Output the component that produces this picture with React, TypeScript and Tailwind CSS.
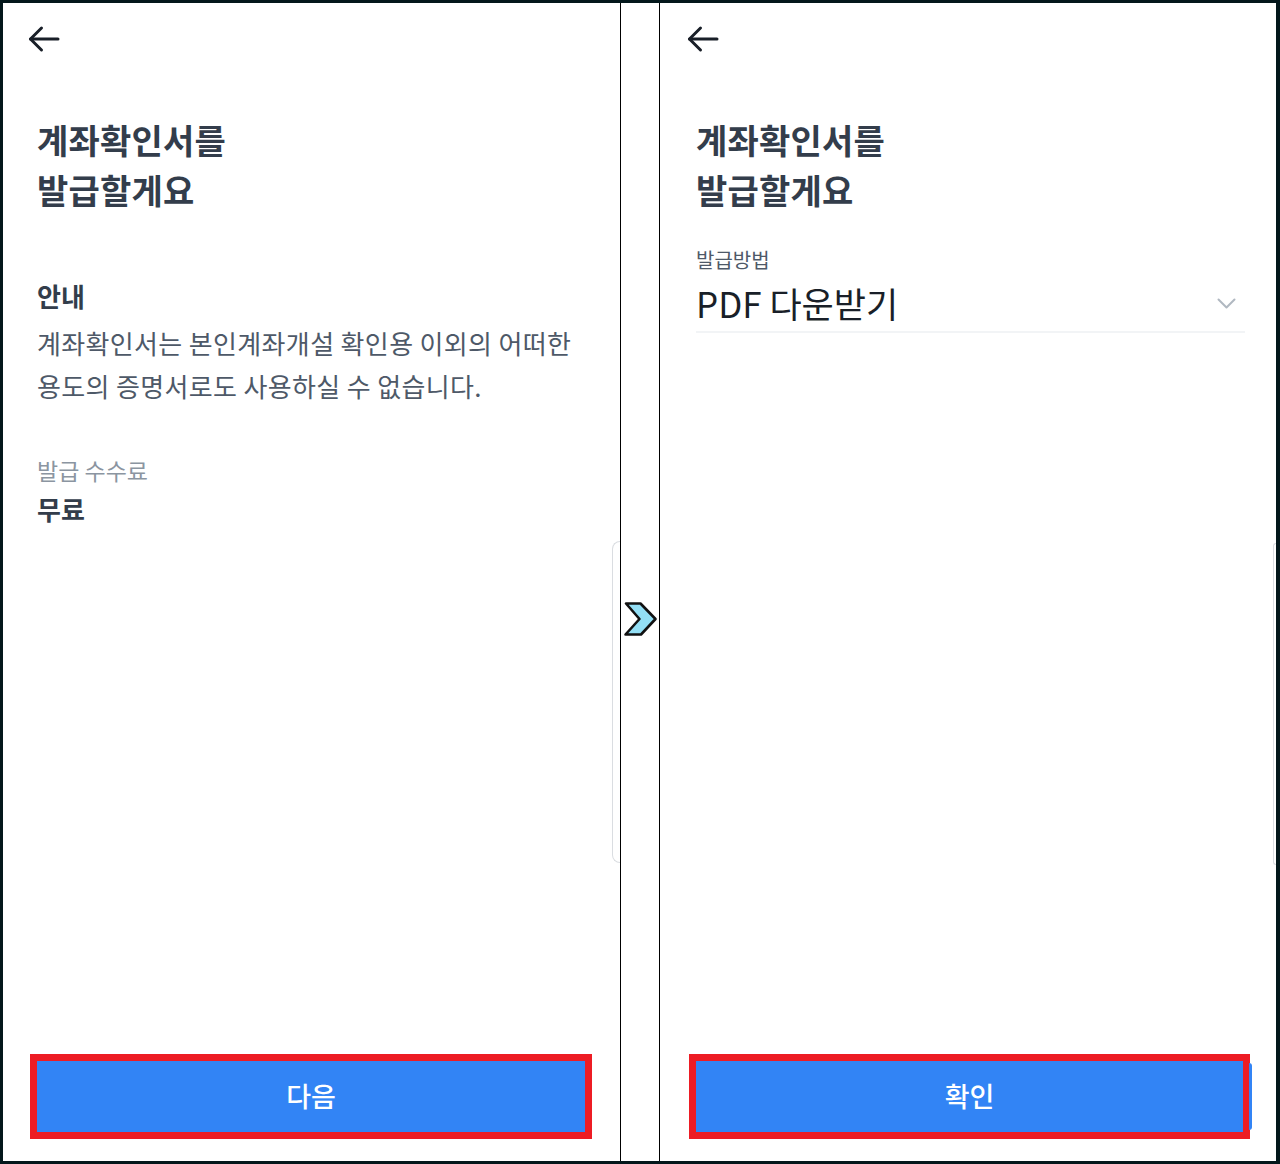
import type { ReactNode } from "react";

const font = { fontFamily: '"Noto Sans CJK KR", "Noto Sans", sans-serif' };

function BackArrow() {
  return (
    <svg width="32" height="28" viewBox="0 0 32 28" fill="none" stroke="#191f28" strokeWidth="3" strokeLinecap="round" strokeLinejoin="round">
      <path d="M2.5 14H30" />
      <path d="M13.5 3 2.5 14l11 11" />
    </svg>
  );
}

function NextChevron() {
  return (
    <svg width="36" height="38" viewBox="0 0 36 38" fill="none">
      <path
        d="M4 3.5h14.5L33.5 19 19 34.5H3.5L17.5 19Z"
        fill="#93dff5"
        stroke="#111"
        strokeWidth="2.6"
        strokeLinejoin="round"
      />
    </svg>
  );
}

function Header() {
  return (
    <div className="h-[72px] flex items-center">
      <BackArrow />
    </div>
  );
}

function Title() {
  return (
    <h1 className="mt-[40px] text-[34px] leading-[50px] font-bold text-[#333d4b] tracking-[0.2px]">
      계좌확인서를
      <br />
      발급할게요
    </h1>
  );
}

function CtaButton({ label, tail }: { label: string; tail?: boolean }) {
  return (
    <div className="relative border-[7px] border-[#ed1c24]">
      <button className="w-full h-[71px] bg-[#3284f5] text-white text-[27px] font-medium flex items-center justify-center">
        {label}
      </button>
      {tail && (
        <span className="absolute -right-[9px] top-[2px] h-[67px] w-[3px] rounded-r-full bg-[#3284f5]" />
      )}
    </div>
  );
}

function Panel({ children, className }: { children: ReactNode; className: string }) {
  return <div className={`relative flex flex-col bg-white ${className}`}>{children}</div>;
}

export default function App() {
  return (
    <div className="w-[1280px] h-[1164px] bg-[#03171b] pt-[3px] pb-[3px] pl-[3px] pr-[4px]" style={font}>
      <div className="flex h-full">
        {/* Step 1 */}
        <Panel className="w-[617px] pl-[34px]">
          <div className="-ml-[9px]">
            <Header />
          </div>
          <Title />

          <h2 className="mt-[64px] text-[26px] leading-[34px] font-bold text-[#333d4b]">안내</h2>
          <p className="mt-[8px] text-[26px] leading-[43px] text-[#4e5968] tracking-[0.35px]">
            계좌확인서는 본인계좌개설 확인용 이외의 어떠한
            <br />
            용도의 증명서로도 사용하실 수 없습니다.
          </p>

          <p className="mt-[48px] text-[23px] leading-[30px] text-[#8b95a1]">발급 수수료</p>
          <p className="mt-[7px] text-[26px] leading-[34px] font-bold text-[#333d4b]">무료</p>

          <div className="mt-auto -ml-[7px] mr-[28px] pb-[22px]">
            <CtaButton label="다음" />
          </div>

          <span className="absolute right-0 top-[538px] h-[322px] w-[8px] rounded-l-[8px] border border-r-0 border-[#dadde1]" />
        </Panel>

        <div className="w-px bg-black" />

        {/* arrow between steps */}
        <div className="w-[38px] bg-white flex items-start justify-center pt-[597px]">
          <NextChevron />
        </div>

        <div className="w-px bg-black" />

        {/* Step 2 */}
        <Panel className="w-[616px] pl-[36px] pr-[31px]">
          <div className="-ml-[9px]">
            <Header />
          </div>
          <Title />

          <p className="mt-[31px] text-[20px] leading-[28px] text-[#4e5968]">발급방법</p>
          <div className="mt-[7px] pb-[6px] border-b-2 border-[#f2f4f6] flex items-center justify-between">
            <span className="text-[35px] leading-[44px] text-[#191f28]">PDF 다운받기</span>
            <svg width="19" height="11" viewBox="0 0 19 11" fill="none" stroke="#b0b8c1" strokeWidth="2" strokeLinecap="round" strokeLinejoin="round" className="mr-[9px]">
              <path d="M1.5 1.5 9.5 9.5 17.5 1.5" />
            </svg>
          </div>

          <div className="mt-auto -ml-[7px] -mr-[5px] pb-[22px]">
            <CtaButton label="확인" tail />
          </div>

          <span className="absolute right-0 top-[540px] h-[322px] w-[3px] rounded-l-[8px] border border-r-0 border-[#dadde1]" />
        </Panel>
      </div>
    </div>
  );
}
